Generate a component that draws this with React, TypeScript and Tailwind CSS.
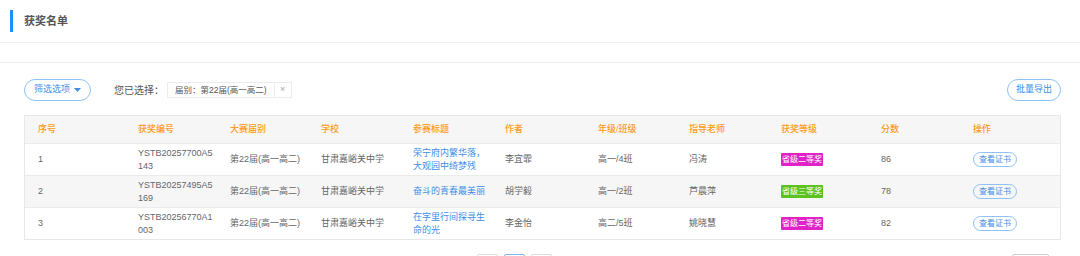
const rows = [
  {
    no: "1",
    code: "YSTB20257700A5143",
    session: "第22届(高一高二)",
    school: "甘肃嘉峪关中学",
    title: "荣宁府内繁华落，大观园中绮梦残",
    author: "李宜霏",
    grade: "高一/4班",
    teacher: "冯涛",
    award: "省级二等奖",
    awardColor: "bg-[#e022c6]",
    score: "86",
  },
  {
    no: "2",
    code: "YSTB20257495A5169",
    session: "第22届(高一高二)",
    school: "甘肃嘉峪关中学",
    title: "奋斗的青春最美丽",
    author: "胡学毅",
    grade: "高一/2班",
    teacher: "芦晨萍",
    award: "省级三等奖",
    awardColor: "bg-[#5cc21e]",
    score: "78",
  },
  {
    no: "3",
    code: "YSTB20256770A1003",
    session: "第22届(高一高二)",
    school: "甘肃嘉峪关中学",
    title: "在字里行间探寻生命的光",
    author: "李金怡",
    grade: "高二/5班",
    teacher: "姚晓慧",
    award: "省级二等奖",
    awardColor: "bg-[#e022c6]",
    score: "82",
  },
];

const headers = ["序号", "获奖编号", "大赛届别", "学校", "参赛标题", "作者", "年级/班级", "指导老师", "获奖等级", "分数", "操作"];

const cols = "grid grid-cols-[100px_92px_91px_92px_92px_93px_91px_92px_100px_92px_1fr]";

export default function App() {
  return (
    <div className="w-[1080px] h-[256px] overflow-hidden bg-white text-[#666] font-['Liberation_Sans','Noto_Sans_CJK_SC',sans-serif]">
      {/* page title */}
      <div className="h-[43px] flex items-center border-b border-[#f0f0f0]">
        <div className="ml-[10px] w-[3px] h-[22px] bg-[#1e8fff]"></div>
        <div className="ml-[11px] text-[11px] font-bold text-[#555]">获奖名单</div>
      </div>
      <div className="h-[20px] border-b border-[#efefef]"></div>

      <div className="pl-[24px] pt-[16px]">
        {/* filter row */}
        <div className="flex items-center h-[22px] w-[1037px]">
          <button className="w-[67px] h-[22px] rounded-full border border-[#8ec2f7] text-[#3d8ee8] text-[9px] flex items-center justify-center gap-[4px]">
            筛选选项
            <svg width="7" height="4" viewBox="0 0 7 4">
              <path d="M0 0h7L3.5 4z" fill="#3d8ee8" />
            </svg>
          </button>
          <span className="ml-[23px] text-[10px] text-[#555]">您已选择：</span>
          <div className="ml-[3px] flex items-center h-[16px] border border-[#ececec] text-[8.5px] text-[#555]">
            <span className="px-[7px]">届别：第22届(高一高二)</span>
            <span className="w-[17px] h-full border-l border-[#ececec] flex items-center justify-center text-[#aaa] text-[9px]">×</span>
          </div>
          <button className="ml-auto w-[54px] h-[22px] rounded-full border border-[#8ec2f7] text-[#3d8ee8] text-[9px]">
            批量导出
          </button>
        </div>

        {/* table */}
        <div className="mt-[14px] w-[1037px] border border-[#e8e8e8]">
          <div className={`${cols} h-[27px] items-center bg-[#f6f6f6] text-[9px] text-[#ff9a1a] font-medium`}>
            {headers.map((h) => (
              <div key={h} className="pl-[13px]">{h}</div>
            ))}
          </div>
          {rows.map((r, i) => (
            <div
              key={r.no}
              className={`${cols} h-[32px] items-center text-[9px] leading-[13px] border-t border-[#ebebeb] ${i === 1 ? "bg-[#f6f6f6]" : "bg-white"}`}
            >
              <div className="pl-[13px]">{r.no}</div>
              <div className="pl-[13px]">
                <div className="w-[75px] break-all">{r.code}</div>
              </div>
              <div className="pl-[13px]">{r.session}</div>
              <div className="pl-[13px]">{r.school}</div>
              <div className="pl-[13px] text-[#3d8ee8]">
                <div className="w-[73px]">{r.title}</div>
              </div>
              <div className="pl-[13px]">{r.author}</div>
              <div className="pl-[13px]">{r.grade}</div>
              <div className="pl-[13px]">{r.teacher}</div>
              <div className="pl-[13px]">
                <span className={`inline-block px-[1px] h-[13px] leading-[13px] rounded-[1px] text-white text-[8px] ${r.awardColor}`}>{r.award}</span>
              </div>
              <div className="pl-[13px]">{r.score}</div>
              <div className="pl-[13px]">
                <button className="w-[44px] h-[15px] rounded-full border border-[#8ec2f7] text-[#3d8ee8] text-[8px] leading-[13px]">查看证书</button>
              </div>
            </div>
          ))}
        </div>

        {/* pagination */}
        <div className="relative mt-[14px] h-[21px]">
          <div className="absolute left-[453px] top-0 flex gap-[6px]">
            <div className="w-[21px] h-[21px] border border-[#dcdcdc] rounded-[2px]"></div>
            <div className="w-[21px] h-[21px] border border-[#7db6f2] rounded-[2px]"></div>
            <div className="w-[21px] h-[21px] border border-[#dcdcdc] rounded-[2px]"></div>
          </div>
          <div className="absolute left-[988px] top-0 w-[37px] h-[21px] border border-[#cfcfcf] rounded-[2px]"></div>
        </div>
      </div>
    </div>
  );
}
